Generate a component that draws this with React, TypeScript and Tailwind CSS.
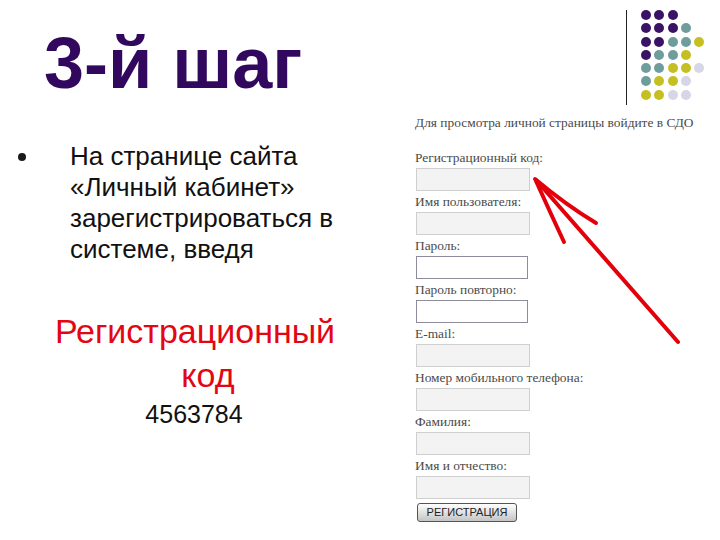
import React from "react"

const dotRows = ["PPP", "PPPT", "PPTTY", "PTTY", "TTYYL", "TYYL", "YYLL"]

const dotColor: Record<string, string> = {
  P: "bg-[#3a1366]",
  T: "bg-[#6f9d9c]",
  Y: "bg-[#c6bf22]",
  L: "bg-[#d6d6e6]",
}

const fields = [
  { label: "Регистрационный код:", dark: false, w: "w-[114px]" },
  { label: "Имя пользователя:", dark: false, w: "w-[114px]" },
  { label: "Пароль:", dark: true, w: "w-[112px]" },
  { label: "Пароль повторно:", dark: true, w: "w-[112px]" },
  { label: "E-mail:", dark: false, w: "w-[114px]" },
  { label: "Номер мобильного телефона:", dark: false, w: "w-[114px]" },
  { label: "Фамилия:", dark: false, w: "w-[114px]" },
  { label: "Имя и отчество:", dark: false, w: "w-[114px]" },
]

export default function App() {
  return (
    <div className="relative w-[720px] h-[540px] bg-white overflow-hidden flex font-['Liberation_Sans',Arial,sans-serif]">
      {/* левая часть слайда */}
      <div className="w-[400px] shrink-0">
        <h1 className="pl-[44px] pt-[27px] text-[72px] leading-[72px] font-bold text-[#32085f]">3-й шаг</h1>

        <div className="mt-[42px] flex pl-[18px]">
          <span className="w-[8px] h-[8px] rounded-full bg-[#1a1a1a] mt-[12px] shrink-0" />
          <p className="ml-[44px] text-[26px] leading-[31px] text-[#111]">
            На странице сайта
            <br />
            «Личный кабинет»
            <br />
            зарегистрироваться в
            <br />
            системе, введя
          </p>
        </div>

        <div className="mt-[44px] w-[390px] text-center text-[34px] leading-[44px] text-[#e30613]">
          <div>Регистрационный</div>
          <div className="pl-[26px]">код</div>
        </div>
        <div className="mt-[2px] w-[388px] text-center text-[25px] leading-[31px] text-[#111]">4563784</div>
      </div>

      {/* правая часть: декор и форма */}
      <div className="flex-1 flex flex-col">
        <div className="h-[113px] flex justify-end pr-[16px]">
          <div className="w-px h-[95px] mt-[10px] bg-[#222]" />
          <div className="ml-[14px] mt-[10px] flex flex-col gap-y-[3.3px]">
            {dotRows.map((row, i) => (
              <div key={i} className="flex gap-x-[3.2px]">
                {row.split("").map((c, j) => (
                  <span key={j} className={`w-[10px] h-[10px] rounded-full ${dotColor[c]}`} />
                ))}
              </div>
            ))}
          </div>
        </div>

        <div className="pl-[15px] font-['Liberation_Serif',serif] text-[13.4px] text-[#4a4a4a]">
          <div className="h-[20px] leading-[20px]">Для просмотра личной страницы войдите в СДО</div>
          <div className="mt-[14px]">
            {fields.map(f => (
              <div key={f.label}>
                <div className="h-[21px] leading-[21px]">{f.label}</div>
                <input
                  readOnly
                  className={`block h-[23px] ${f.w} ml-[1px] border ${
                    f.dark ? "border-[#8c8c9c] bg-white" : "border-[#cfcfcf] bg-[#f3f3f3]"
                  }`}
                />
              </div>
            ))}
          </div>
          <button className="mt-[4px] ml-[2px] h-[19px] w-[100px] rounded-[3px] border border-[#555] bg-linear-to-b from-white to-[#c4c4c4] font-['Liberation_Sans',Arial,sans-serif] text-[11px] leading-[17px] text-[#222]">
            РЕГИСТРАЦИЯ
          </button>
        </div>
      </div>

      {/* красная стрелка поверх формы */}
      <svg className="absolute inset-0 pointer-events-none" width="720" height="540" viewBox="0 0 720 540">
        <g stroke="#e3000b" strokeWidth="4" strokeLinecap="round" fill="none">
          <path d="M535 179 Q566 205 596 223" />
          <path d="M536 181 Q550 212 564 242" />
          <path d="M536 180 L678 342" />
        </g>
      </svg>
    </div>
  )
}
